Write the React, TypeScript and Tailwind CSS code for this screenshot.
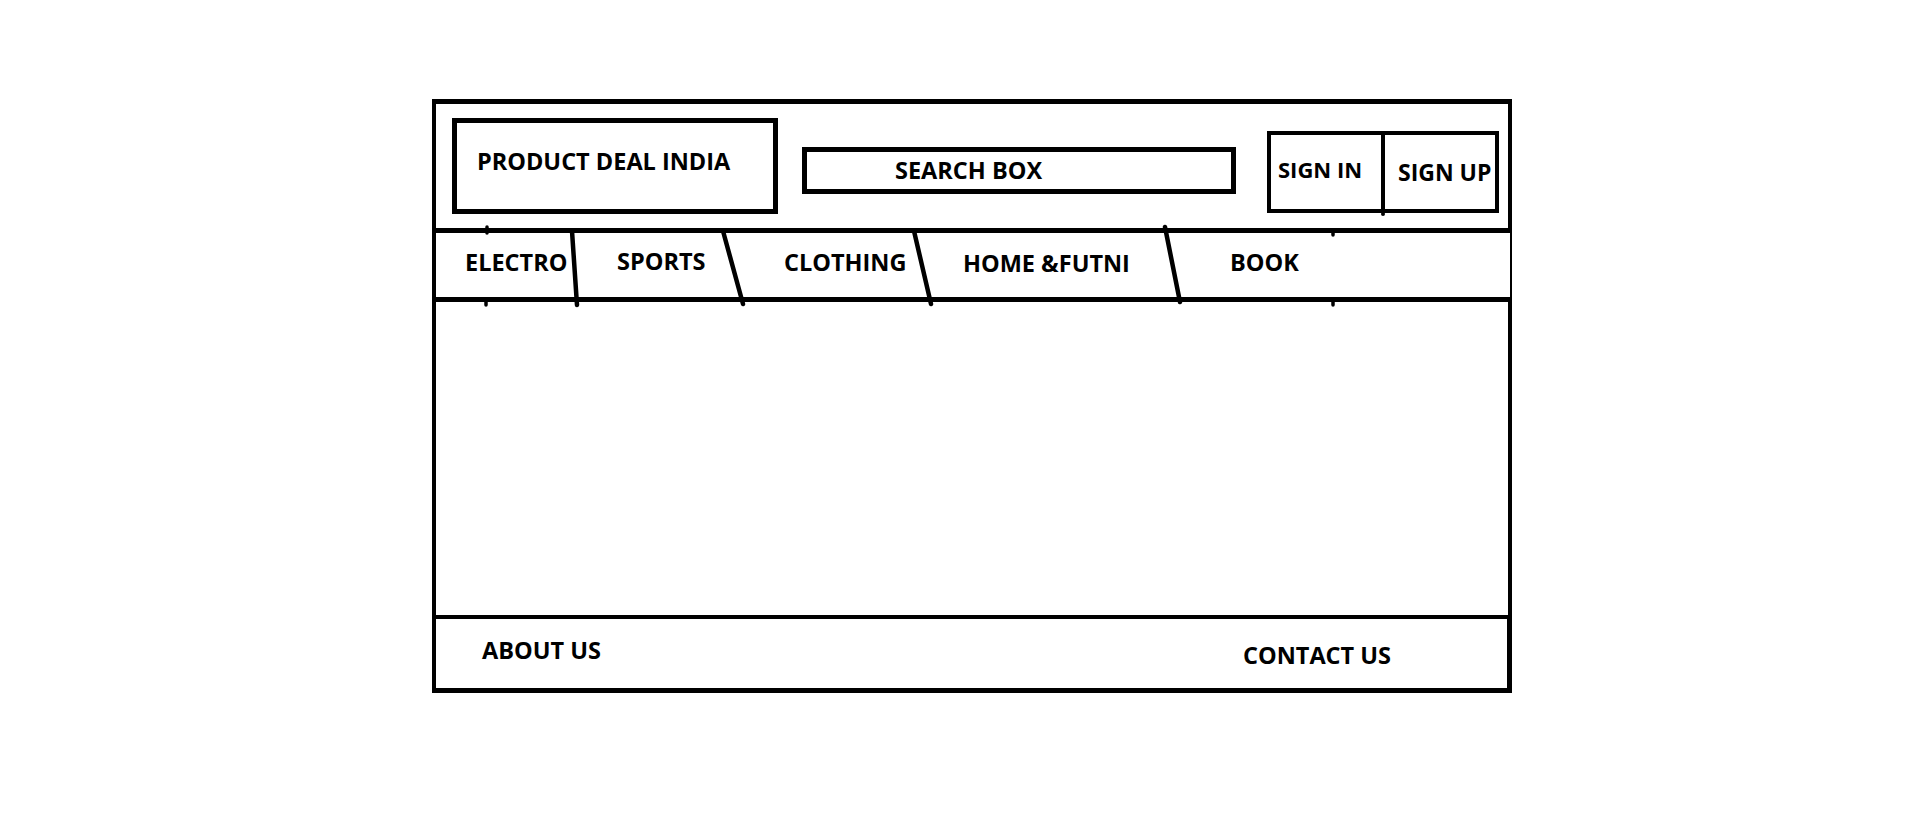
export default function App() {
  return (
    <div className="w-full h-[816px] bg-white pt-[99px] pl-[432px] font-['Open_Sans',sans-serif] font-bold text-black">
      <div className="flex flex-col w-[1080px] h-[594px]">
        <header className="flex items-start h-[129px] border-t-[5px] border-x-4 border-black">
          <div className="shrink-0 ml-[16px] mt-[14px] w-[326px] h-[96px] border-[5px] border-black pl-[20px] pt-[27px] text-[23.5px] leading-none whitespace-nowrap">
            PRODUCT DEAL INDIA
          </div>
          <div className="shrink-0 ml-[24px] mt-[43px] w-[434px] h-[47px] border-[5px] border-black pl-[88px] pt-[7px] text-[23.5px] leading-none whitespace-nowrap">
            SEARCH BOX
          </div>
          <div className="relative shrink-0 ml-[31px] mt-[27px] w-[232px] h-[82px] border-4 border-black flex">
            <div className="w-[110px] shrink-0 pl-[7px] pt-[23px] text-[22px] leading-none whitespace-nowrap">SIGN IN</div>
            <div className="w-[4px] shrink-0 bg-black" />
            <div className="flex-1 pl-[13px] pt-[26px] text-[23px] leading-none whitespace-nowrap">SIGN UP</div>
            <span className="absolute left-[110px] -bottom-[7px] w-[4px] h-[4px] bg-black rounded-full" />
          </div>
        </header>
        <nav className="relative flex h-[74px] border-t-[5px] border-b-[5px] border-l-4 border-r-2 border-black pl-[29px] text-[23.5px] leading-none whitespace-nowrap">
          <span className="shrink-0 w-[152px] pt-[18px]">ELECTRO</span>
          <span className="shrink-0 w-[167px] pt-[17px]">SPORTS</span>
          <span className="shrink-0 w-[179px] pt-[18px]">CLOTHING</span>
          <span className="shrink-0 w-[267px] pt-[19px]">HOME &amp;FUTNI</span>
          <span className="shrink-0 pt-[18px]">BOOK</span>
          <svg
            className="absolute -left-[4px] -top-[5px] overflow-visible pointer-events-none"
            width="1080"
            height="74"
            viewBox="0 0 1080 74"
          >
            <g stroke="#000" strokeWidth="4.5" strokeLinecap="round" fill="none">
              <line x1="140" y1="3" x2="145" y2="77" />
              <line x1="291" y1="3" x2="311" y2="76" />
              <line x1="482" y1="3" x2="499" y2="76" />
              <line x1="733" y1="-1" x2="748" y2="74" />
            </g>
            <g stroke="#000" strokeWidth="3.5" strokeLinecap="round">
              <line x1="55" y1="-1" x2="55" y2="5" />
              <line x1="54" y1="71" x2="54" y2="77" />
              <line x1="901" y1="3" x2="901" y2="7" />
              <line x1="901" y1="71" x2="901" y2="77" />
            </g>
          </svg>
        </nav>
        <main className="h-[313px] border-x-4 border-black" />
        <footer className="flex h-[78px] border-t-4 border-b-[5px] border-l-4 border-r-[5px] border-black text-[23.5px] leading-none whitespace-nowrap">
          <span className="shrink-0 w-[807px] pl-[46px] pt-[20px]">ABOUT US</span>
          <span className="shrink-0 pt-[25px]">CONTACT US</span>
        </footer>
      </div>
    </div>
  );
}
